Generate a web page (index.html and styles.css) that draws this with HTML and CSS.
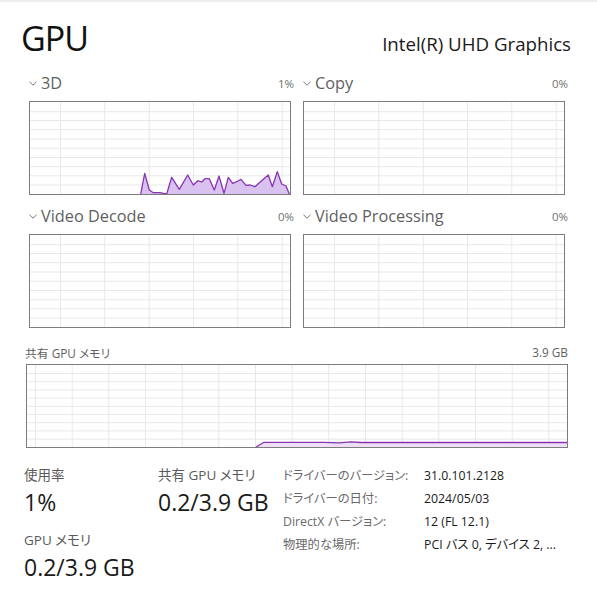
FILE: index.html
```html
<!DOCTYPE html>
<html lang="ja">
<head>
<meta charset="utf-8">
<title>GPU</title>
<link rel="stylesheet" href="styles.css">
</head>
<body>
<div class="top-rule"></div>
<header class="head">
  <h1 class="title">GPU</h1>
  <div class="adapter">Intel(R) UHD Graphics</div>
</header>

<section class="engines">
  <div class="engine">
    <div class="engine-head">
      <span class="eng-name"><svg class="chev" width="8" height="5" viewBox="0 0 8 5"><polyline points="0.5,0.8 4,4.2 7.5,0.8" fill="none" stroke="#777" stroke-width="1"/></svg>3D</span>
      <span class="eng-pct">1%</span>
    </div>
    <div class="chart chart-eng">
      <svg class="chart-svg" width="260" height="92" viewBox="0 0 260 92">
        <g class="grid">
          <path d="M30.5 0V92M74.8 0V92M119.2 0V92M163.5 0V92M207.8 0V92M252.2 0V92M0 9.7H260M0 18.5H260M0 27.7H260M0 37H260M0 46.2H260M0 55.5H260M0 64.7H260M0 73.8H260M0 83H260"/>
        </g>
        <path class="area" d="M110.7 92L114.7 71.3L119.3 88L123.3 90.7L130 90.7L133.3 91.3L136.7 92L141.7 75.3L149.3 87.3L157.7 73L163.3 83L167.7 78.7L171.7 80L175 76.7L179.3 76.7L184.3 88L189 74L194 91.3L198.3 75.3L202.7 81.3L206.7 79.7L211 77.3L216 83.3L220 83L225 84.7L229.3 80.7L238.3 73L242.3 84.7L247.3 69.7L251.7 82L256 84L259.3 92Z"/>
        <polyline class="line" points="110.7,92 114.7,71.3 119.3,88 123.3,90.7 130,90.7 133.3,91.3 136.7,92 141.7,75.3 149.3,87.3 157.7,73 163.3,83 167.7,78.7 171.7,80 175,76.7 179.3,76.7 184.3,88 189,74 194,91.3 198.3,75.3 202.7,81.3 206.7,79.7 211,77.3 216,83.3 220,83 225,84.7 229.3,80.7 238.3,73 242.3,84.7 247.3,69.7 251.7,82 256,84 259.3,92"/>
      </svg>
    </div>
  </div>

  <div class="engine">
    <div class="engine-head">
      <span class="eng-name"><svg class="chev" width="8" height="5" viewBox="0 0 8 5"><polyline points="0.5,0.8 4,4.2 7.5,0.8" fill="none" stroke="#777" stroke-width="1"/></svg>Copy</span>
      <span class="eng-pct">0%</span>
    </div>
    <div class="chart chart-eng">
      <svg class="chart-svg" width="260" height="92" viewBox="0 0 260 92">
        <g class="grid">
          <path d="M30.5 0V92M74.8 0V92M119.2 0V92M163.5 0V92M207.8 0V92M252.2 0V92M0 9.7H260M0 18.5H260M0 27.7H260M0 37H260M0 46.2H260M0 55.5H260M0 64.7H260M0 73.8H260M0 83H260"/>
        </g>
      </svg>
    </div>
  </div>

  <div class="engine">
    <div class="engine-head">
      <span class="eng-name"><svg class="chev" width="8" height="5" viewBox="0 0 8 5"><polyline points="0.5,0.8 4,4.2 7.5,0.8" fill="none" stroke="#777" stroke-width="1"/></svg>Video Decode</span>
      <span class="eng-pct">0%</span>
    </div>
    <div class="chart chart-eng">
      <svg class="chart-svg" width="260" height="92" viewBox="0 0 260 92">
        <g class="grid">
          <path d="M30.5 0V92M74.8 0V92M119.2 0V92M163.5 0V92M207.8 0V92M252.2 0V92M0 9.7H260M0 18.5H260M0 27.7H260M0 37H260M0 46.2H260M0 55.5H260M0 64.7H260M0 73.8H260M0 83H260"/>
        </g>
      </svg>
    </div>
  </div>

  <div class="engine">
    <div class="engine-head">
      <span class="eng-name"><svg class="chev" width="8" height="5" viewBox="0 0 8 5"><polyline points="0.5,0.8 4,4.2 7.5,0.8" fill="none" stroke="#777" stroke-width="1"/></svg>Video Processing</span>
      <span class="eng-pct">0%</span>
    </div>
    <div class="chart chart-eng">
      <svg class="chart-svg" width="260" height="92" viewBox="0 0 260 92">
        <g class="grid">
          <path d="M30.5 0V92M74.8 0V92M119.2 0V92M163.5 0V92M207.8 0V92M252.2 0V92M0 9.7H260M0 18.5H260M0 27.7H260M0 37H260M0 46.2H260M0 55.5H260M0 64.7H260M0 73.8H260M0 83H260"/>
        </g>
      </svg>
    </div>
  </div>
</section>

<section class="mem">
  <div class="mem-head">
    <span>共有 GPU メモリ</span>
    <span>3.9 GB</span>
  </div>
  <div class="chart chart-mem">
    <svg class="chart-svg" width="540" height="82" viewBox="0 0 540 82">
      <g class="grid">
        <path d="M8.5 0V82M45.2 0V82M81.8 0V82M118.5 0V82M155.2 0V82M191.8 0V82M228.5 0V82M265.2 0V82M301.8 0V82M338.5 0V82M375.2 0V82M411.8 0V82M448.5 0V82M485.2 0V82M521.8 0V82M0 8.5H540M0 16.7H540M0 24.9H540M0 33.1H540M0 41.3H540M0 49.5H540M0 57.7H540M0 65.9H540M0 74.1H540"/>
      </g>
      <path class="area-mem" d="M229 82L237 77.3L297 77.3L312 77.8L324 76.8L334 77.5L540 77.5L540 82Z"/>
      <polyline class="line" points="229,82 237,77.3 297,77.3 312,77.8 324,76.8 334,77.5 540,77.5"/>
    </svg>
  </div>
</section>

<section class="stats">
  <div class="stat-col stat-col-1">
    <div class="stat">
      <div class="stat-label">使用率</div>
      <div class="stat-value">1%</div>
    </div>
    <div class="stat">
      <div class="stat-label">GPU メモリ</div>
      <div class="stat-value">0.2/3.9 GB</div>
    </div>
  </div>
  <div class="stat-col stat-col-2">
    <div class="stat">
      <div class="stat-label">共有 GPU メモリ</div>
      <div class="stat-value">0.2/3.9 GB</div>
    </div>
  </div>
  <dl class="props">
    <dt>ドライバーのバージョン:</dt><dd>31.0.101.2128</dd>
    <dt>ドライバーの日付:</dt><dd>2024/05/03</dd>
    <dt>DirectX バージョン:</dt><dd>12 (FL 12.1)</dd>
    <dt>物理的な場所:</dt><dd>PCI バス 0, デバイス 2, ...</dd>
  </dl>
</section>
</body>
</html>
```

FILE: styles.css
```css
* { box-sizing: border-box; }

html, body {
  margin: 0;
  padding: 0;
  background: #ffffff;
}

body {
  width: 597px;
  height: 594px;
  overflow: hidden;
  font-family: "Open Sans", "Noto Sans CJK JP", sans-serif;
  font-feature-settings: "palt";
  color: #1a1a1a;
}

.top-rule {
  height: 2px;
  background: #efefef;
}

/* header */
.head {
  display: flex;
  justify-content: space-between;
  align-items: baseline;
  margin: 16px 26px 0 21px;
  height: 40px;
}

.title {
  margin: 0;
  font-size: 34px;
  font-weight: 400;
  line-height: 40px;
  color: #111;
  letter-spacing: -1px;
}

.adapter {
  font-size: 18.7px;
  line-height: 24px;
  color: #1a1a1a;
}

/* engine charts */
.engines {
  display: grid;
  grid-template-columns: 265px 265px;
  column-gap: 9px;
  row-gap: 9px;
  margin: 13px 0 0 29px;
}

.engine-head {
  display: flex;
  justify-content: space-between;
  align-items: center;
  height: 24px;
  margin-bottom: 6px;
}

.eng-name {
  display: flex;
  align-items: center;
  gap: 4px;
  font-size: 16.3px;
  color: #5f5f5f;
}

.chev {
  display: block;
  margin-top: 1px;
}

.eng-pct {
  font-size: 11.5px;
  color: #707070;
}

.chart {
  border: 1px solid #7c7c7c;
  background: #ffffff;
}

.chart-eng {
  width: 262px;
  height: 94px;
}

.chart-svg {
  display: block;
}

.grid path {
  stroke: #e8e8e8;
  stroke-width: 1;
  fill: none;
}

.area {
  fill: #d9c1f0;
  stroke: none;
}

.area-mem {
  fill: #ecdff6;
  stroke: none;
}

.line {
  fill: none;
  stroke: #8834b3;
  stroke-width: 1.3;
  stroke-linejoin: round;
}

/* shared memory */
.mem {
  width: 543px;
  margin: 16px 0 0 25px;
}

.mem-head {
  display: flex;
  justify-content: space-between;
  align-items: center;
  height: 16px;
  margin-bottom: 4px;
  font-size: 11.8px;
  color: #5f5f5f;
}

.chart-mem {
  width: 542px;
  height: 84px;
  margin-left: 1px;
}

/* stats */
.stats {
  display: flex;
  align-items: flex-start;
  margin: 17px 0 0 24px;
}

.stat-col {
  display: flex;
  flex-direction: column;
  gap: 13px;
}

.stat-col-1 { width: 134px; }
.stat-col-2 { width: 125px; }

.stat-label {
  font-size: 13.5px;
  line-height: 20px;
  color: #5a5a5a;
}

.stat-value {
  margin-top: 2px;
  font-size: 23px;
  line-height: 30px;
  color: #1a1a1a;
}

.props {
  display: grid;
  grid-template-columns: 141px auto;
  margin: -1px 0 0 0;
  font-size: 12.3px;
  line-height: 23px;
}

.props dt {
  color: #6a6a6a;
}

.props dd {
  margin: 0;
  color: #1a1a1a;
}
```
